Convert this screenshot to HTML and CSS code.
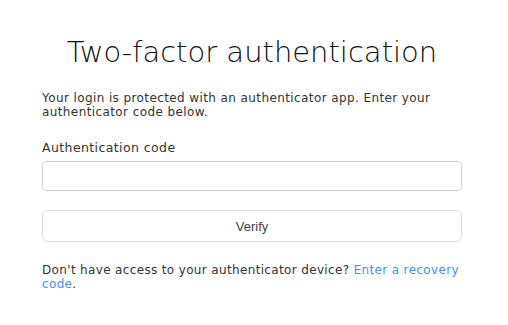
FILE: index.html
```html
<!DOCTYPE html>
<html>
<head>
<meta charset="utf-8">
<link rel="stylesheet" href="styles.css">
</head>
<body>
<main class="card">
  <h1 class="title">Two-factor authentication</h1>
  <p class="intro">Your login is protected with an authenticator app. Enter your authenticator code below.</p>
  <form class="form">
    <label class="label" for="code">Authentication code</label>
    <input class="input" id="code" type="text">
    <button class="btn" type="button">Verify</button>
  </form>
  <p class="help">Don't have access to your authenticator device? <a class="link" href="#">Enter a recovery code</a>.</p>
</main>
</body>
</html>
```
FILE: styles.css
```css
html, body { margin: 0; padding: 0; background: #fff; }
body { font-family: "DejaVu Sans", sans-serif; color: #222; }
.card { width: 420px; margin: 0 auto; padding: 34px 0 0 0; position: relative; left: -2px; }
.title { font-family: "DejaVu Sans", sans-serif; font-weight: 300; font-size: 29px; line-height: 36px; margin: 0 0 21px; text-align: center; color: #111; }
.intro { font-size: 12px; line-height: 14px; letter-spacing: 0.4px; margin: 0 0 21px; color: #333; }
.form { display: flex; flex-direction: column; }
.label { font-size: 12.5px; line-height: 15px; letter-spacing: 0.4px; color: #333; margin-bottom: 6px; }
.input { box-sizing: border-box; height: 30px; border: 1px solid #cfd2d6; border-radius: 4px; margin: 0 0 19px; }
.btn { box-sizing: border-box; height: 32px; border: 1px solid #dcdfe3; border-radius: 6px; background: #fff; font-family: "Liberation Sans", Arial, sans-serif; font-size: 13px; color: #444; margin-bottom: 21px; }
.help { font-size: 12px; line-height: 14px; letter-spacing: 0.35px; margin: 0; color: #333; }
.link { color: #4a8ef0; text-decoration: none; }
```
